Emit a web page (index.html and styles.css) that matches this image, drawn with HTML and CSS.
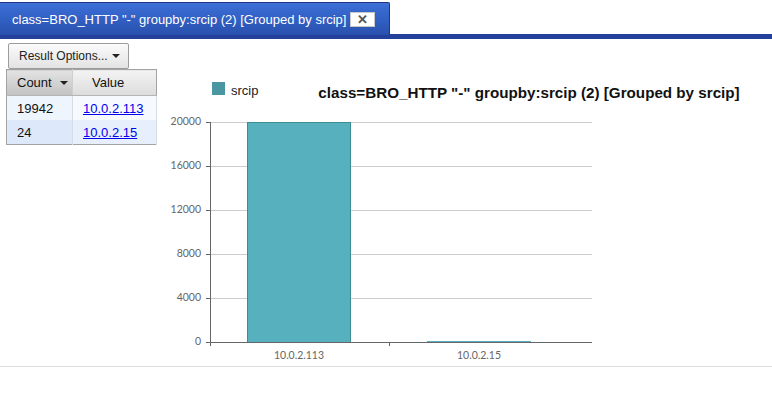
FILE: index.html
```html
<!DOCTYPE html>
<html>
<head>
<meta charset="utf-8">
<link rel="stylesheet" href="styles.css">
</head>
<body>
<div class="tabbar">
  <div class="tab">
    <span class="tab-title">class=BRO_HTTP "-" groupby:srcip (2) [Grouped by srcip]</span>
    <span class="tab-close">✕</span>
  </div>
</div>
<div class="content">
  <div class="left">
    <button class="opts">Result Options... <span class="caret"></span></button>
    <table class="grid">
      <thead>
        <tr><th class="sorted">Count <span class="caret"></span></th><th>Value</th></tr>
      </thead>
      <tbody>
        <tr class="r1"><td>19942</td><td class="v"><a href="#">10.0.2.113</a></td></tr>
        <tr class="r2"><td>24</td><td class="v"><a href="#">10.0.2.15</a></td></tr>
      </tbody>
    </table>
  </div>
  <svg class="chart" width="612" height="327" viewBox="160 39 612 327">
    <rect x="212" y="82" width="13" height="13" fill="#4a97a2"/>
    <text x="231" y="95" class="legend">srcip</text>
    <text x="529" y="98" class="title" text-anchor="middle">class=BRO_HTTP "-" groupby:srcip (2) [Grouped by srcip]</text>
    <g stroke="#cccccc" stroke-width="1">
      <line x1="210" y1="122.5" x2="592" y2="122.5"/>
      <line x1="210" y1="166.5" x2="592" y2="166.5"/>
      <line x1="210" y1="210.5" x2="592" y2="210.5"/>
      <line x1="210" y1="254.5" x2="592" y2="254.5"/>
      <line x1="210" y1="298.5" x2="592" y2="298.5"/>
    </g>
    <rect x="247.5" y="122.5" width="103" height="220" fill="#57b0bd" stroke="#3c8c94"/>
    <rect x="427.5" y="341.5" width="103" height="1" fill="#57b0bd" stroke="#57b0bd"/>
    <g stroke="#666" stroke-width="1">
      <line x1="210.5" y1="122" x2="210.5" y2="346"/>
      <line x1="206" y1="122.5" x2="210" y2="122.5"/>
      <line x1="206" y1="166.5" x2="210" y2="166.5"/>
      <line x1="206" y1="210.5" x2="210" y2="210.5"/>
      <line x1="206" y1="254.5" x2="210" y2="254.5"/>
      <line x1="206" y1="298.5" x2="210" y2="298.5"/>
      <line x1="206" y1="342.5" x2="592" y2="342.5"/>
      <line x1="389.5" y1="342" x2="389.5" y2="346"/>
    </g>
    <g class="ylab" text-anchor="end">
      <text x="201" y="125">20000</text>
      <text x="201" y="169">16000</text>
      <text x="201" y="213">12000</text>
      <text x="201" y="257">8000</text>
      <text x="201" y="301">4000</text>
      <text x="201" y="345">0</text>
    </g>
    <g class="xlab" text-anchor="middle">
      <text x="299" y="359">10.0.2.113</text>
      <text x="479" y="359">10.0.2.15</text>
    </g>
  </svg>
</div>
</body>
</html>
```
FILE: styles.css
```css
html, body {
  margin: 0;
  padding: 0;
  background: #ffffff;
  font-family: "Liberation Sans", Arial, sans-serif;
}
.tabbar {
  height: 34px;
  border-bottom: 5px solid #23419a;
  display: flex;
  align-items: flex-end;
  box-sizing: content-box;
}
.tab {
  box-sizing: border-box;
  width: 390px;
  height: 33px;
  margin-bottom: -1px;
  background: linear-gradient(#3d6fd6, #3160c4 50%, #2a50ad);
  border: 1px solid #1d3582;
  border-bottom: none;
  border-left: none;
  border-radius: 0 2px 0 0;
  display: flex;
  align-items: center;
  padding-left: 12px;
}
.tab-title {
  color: #ffffff;
  font-size: 13px;
  white-space: nowrap;
}
.tab-close {
  margin-left: 4px;
  width: 25px;
  height: 15px;
  background: #ffffff;
  border: 1px solid #c8c8c8;
  color: #555;
  font-size: 13px;
  font-weight: bold;
  line-height: 13px;
  text-align: center;
  box-sizing: border-box;
}
.content {
  display: flex;
  height: 327px;
  border-bottom: 1px solid #dddddd;
}
.left {
  width: 160px;
  padding-top: 4px;
  padding-left: 6px;
  box-sizing: border-box;
}
.opts {
  display: block;
  margin-left: 2px;
  width: 121px;
  height: 26px;
  padding: 0 0 0 10px;
  text-align: left;
  font-family: "Liberation Sans", Arial, sans-serif;
  font-size: 12px;
  color: #222;
  background: linear-gradient(#fbfbfb, #e3e3e3);
  border: 1px solid #9c9c9c;
  border-radius: 2px;
}
.caret {
  display: inline-block;
  width: 0;
  height: 0;
  border-left: 4px solid transparent;
  border-right: 4px solid transparent;
  border-top: 4px solid #222;
  vertical-align: middle;
  margin-left: 1px;
  margin-bottom: 2px;
}
.grid {
  border-collapse: collapse;
  width: 151px;
  border: 1px solid #a3a3a3;
  font-size: 13px;
  color: #111;
}
.grid th {
  height: 25px;
  padding: 0;
  font-weight: normal;
  text-align: left;
  background: linear-gradient(#f3f3f3, #dcdcdc);
  border-bottom: 1px solid #b5b5b5;
}
.grid th.sorted {
  width: 66px;
  padding-left: 10px;
  box-sizing: border-box;
  background: linear-gradient(#e3e3e3, #c2c2c2);
  border-right: 1px solid #cfcfcf;
}
.grid th + th {
  padding-left: 19px;
}
.grid th.sorted .caret {
  margin-left: 5px;
}
.grid td {
  height: 24px;
  padding: 0 0 0 10px;
  border-right: 1px solid #d6dde6;
}
.grid tr.r1 td { background: #eef5fd; }
.grid tr.r1 td.v { background: #f6f9fe; }
.grid tr.r2 td { background: #dde9fa; }
.grid tr.r2 td.v { background: #e6effb; }
.grid a {
  color: #0000ee;
  text-decoration: underline;
}
.chart {
  display: block;
}
.legend {
  font-family: "Liberation Sans", Arial, sans-serif;
  font-size: 13px;
  fill: #222;
}
.title {
  font-family: "Liberation Sans", Arial, sans-serif;
  font-size: 15.2px;
  font-weight: bold;
  fill: #111;
}
.ylab text, .xlab text {
  font-family: "Lato", sans-serif;
  font-size: 10.5px;
  fill: #666;
}
```
